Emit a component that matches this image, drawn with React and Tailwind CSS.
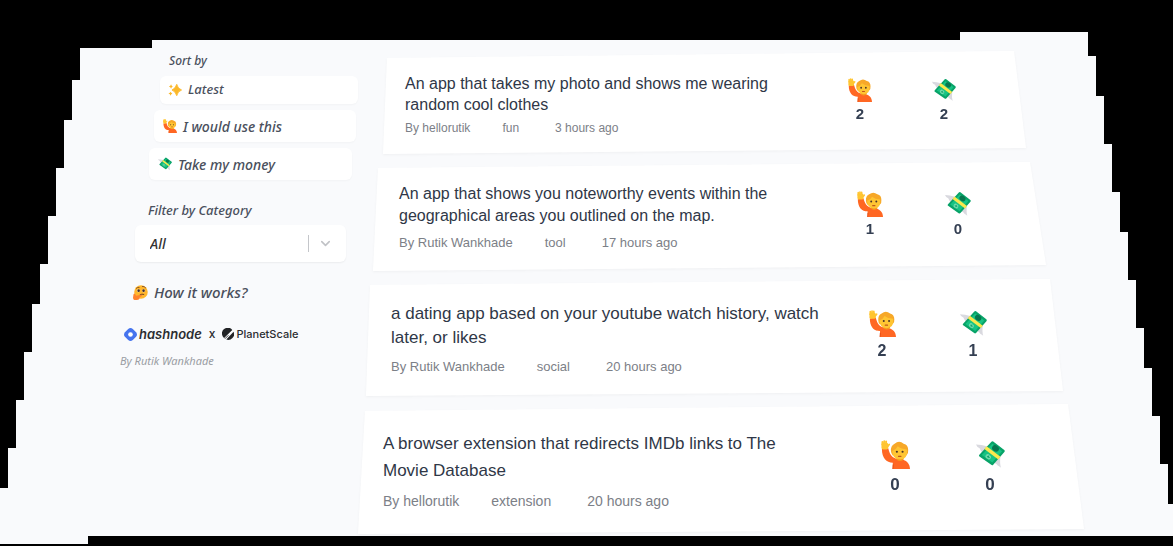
import React from "react";
import { ChevronDown } from "lucide-react";

function RaisedHand({ className }) {
  return (
    <svg viewBox="0 0 32 32" className={className} aria-hidden="true">
      <path d="M1 10 C1 20 6 25 13 25 L13 32 H32 C32 26 28 22 21 21 C14 21 10 18 8 9 Z" fill="#ff6723" />
      <path d="M13.500 27 L13 32" stroke="#e04a12" strokeWidth="1" />
      <path d="M17 18 H25 V21.500 Q21 25 17 21.500 Z" fill="#f59a1f" />
      <rect x="0.500" y="3" width="7.500" height="7.500" rx="2" fill="#ffc531" />
      <path d="M1.500 5 V2 M3.600 4 V1.200 M5.700 4 V1.500 M7.400 7 L9 5" stroke="#ffc531" strokeWidth="2" strokeLinecap="round" />
      <path d="M11 12 Q10.500 6 15 4 Q20 0 25 4 Q30 5 30 11 Q30.500 15 28 17 H13 Q11 15 11 12 Z" fill="#f7a828" />
      <path d="M12.500 12 Q17 10.500 18.500 7 Q22 10 28.500 10.500 Q30 21 21 21.500 Q12 20.500 12.500 12 Z" fill="#ffc533" />
      <circle cx="17.500" cy="13" r="1.200" fill="#4a3428" />
      <circle cx="23.800" cy="13" r="1.200" fill="#4a3428" />
      <path d="M19.300 18 H22" stroke="#c0561c" strokeWidth="1.400" fill="none" strokeLinecap="round" />
    </svg>
  );
}

function FlyingMoney({ className }) {
  return (
    <svg viewBox="0 0 32 30" className={className} aria-hidden="true">
      <path d="M0 4 Q6 4 12 6 L8 14 Q5 11 4 8 Q1 7 0 4 Z" fill="#d9d9df" />
      <path d="M27.500 29.500 Q26 25 27 17 L20 24 Q23 25 24 27 Q26 28 27.500 29.500 Z" fill="#d9d9df" />
      <path d="M17 .8 Q18 -.2 19 .6 L31.200 10 Q32.200 11 31.300 12.200 L19 26.200 Q18 27.200 16.800 26.400 L3.800 17.200 Q2.800 16.300 3.700 15.200 Z" fill="#08a368" />
      <path d="M18 3.200 L28.800 11.400 L18 23.800 L6.400 15.600 Z" fill="#17c383" />
      <ellipse cx="21.500" cy="8.300" rx="4" ry="3.200" fill="#07774e" transform="rotate(38 21.500 8.300)" />
      <ellipse cx="13.500" cy="17.500" rx="3.200" ry="2.600" fill="#6fdcac" transform="rotate(38 13.500 17.500)" />
      <path d="M12 16.800 L15.200 18.400 M14.200 16 L13.200 19" stroke="#0a9b63" strokeWidth=".9" />
      <path d="M11.700 5.800 L27 17.600 L24.600 20.400 L9.200 8.900 Z" fill="#fbe84d" />
    </svg>
  );
}

function Sparkles({ className }) {
  return (
    <svg viewBox="0 0 32 32" className={className} aria-hidden="true">
      <path d="M20 3 Q22 13 31 16 Q22 19 20 29 Q17 19 9 16 Q17 13 20 3 Z" fill="#fbb829" stroke="#fbb829" strokeWidth="2" strokeLinejoin="round" />
      <path d="M7 3 Q8 7 11 8 Q8 9 7 13 Q6 9 2 8 Q6 7 7 3 Z M6 20 Q7 23 10 24 Q7 25 6 29 Q5 25 1 24 Q5 23 6 20 Z" fill="#fbb829" />
    </svg>
  );
}

function Thinking({ className }) {
  return (
    <svg viewBox="0 0 32 32" className={className} aria-hidden="true">
      <circle cx="17" cy="15" r="14.500" fill="#ffb62c" />
      <circle cx="11.500" cy="12" r="3.400" fill="#ffe3a0" />
      <circle cx="22.500" cy="12" r="3.400" fill="#ffe3a0" />
      <circle cx="12" cy="12" r="2.700" fill="#402a32" />
      <circle cx="22.500" cy="12" r="2.700" fill="#402a32" />
      <path d="M7 7 Q10 4 13 5 M20 3 Q24 2 27 6" stroke="#6b3a20" strokeWidth="1.600" fill="none" strokeLinecap="round" />
      <path d="M15 21 Q19 18 23 20" stroke="#5a2c20" strokeWidth="1.800" fill="none" strokeLinecap="round" />
      <path d="M1 20 Q3 16 5 20 L7 23 L18 21 Q21 22 18 24 L14 26 Q15 31 8 32 H3 Q0 31 0 27 Z" fill="#ff822d" />
    </svg>
  );
}

function HashnodeMark({ className }) {
  return (
    <svg viewBox="0 0 28 28" className={className} aria-hidden="true">
      <path d="M2 9 L9 2 Q14 -2 19 2 L26 9 Q30 14 26 19 L19 26 Q14 30 9 26 L2 19 Q-2 14 2 9 Z" fill="#4674ee" />
      <circle cx="14" cy="14" r="5" fill="#fff" />
    </svg>
  );
}

function PlanetScaleMark({ className }) {
  return (
    <svg viewBox="0 0 28 28" className={className} aria-hidden="true">
      <path d="M1 18 A13.500 13.500 0 0 1 24 4.500 L5 23.500 Q2 21 1 18 Z" fill="#222326" />
      <path d="M27 9 A13.500 13.500 0 0 1 10 27 Z" fill="#222326" />
      <path d="M7 25 L15 17" stroke="#222326" strokeWidth="2" />
    </svg>
  );
}

const sortOptions = [
  { label: "Latest", Icon: Sparkles, box: "ml-10 h-7 w-[198px] pl-2 mt-[5px] text-[13px]" },
  { label: "I would use this", Icon: RaisedHand, box: "ml-[34px] h-8 w-[202px] pl-[9px] mt-[6px] text-[14px]" },
  { label: "Take my money", Icon: FlyingMoney, box: "ml-[29px] h-8 w-[203px] pl-[9px] mt-[6px] text-[14px]" },
];

const ideas = [
  {
    title: "An app that takes my photo and shows me wearing random cool clothes",
    author: "hellorutik",
    tag: "fun",
    time: "3 hours ago",
    use: 2,
    pay: 2,
    margin: "ml-[25px] mr-[147px]",
    shape: "pl-[22px] pr-[62px] pt-[22px] pb-[17px] [clip-path:polygon(4px_7px,calc(100%-12px)_0,100%_calc(100%-6px),0_100%)]",
    body: "max-w-[410px]",
    heading: "text-[16px] leading-[21px]",
    meta: "mt-1 text-[12px] leading-[18px]",
    votes: "gap-11 mt-[5px]",
    icon: "size-6 mb-[2px]",
    count: "text-[15px]",
  },
  {
    title: "An app that shows you noteworthy events within the geographical areas you outlined on the map.",
    author: "Rutik Wankhade",
    tag: "tool",
    time: "17 hours ago",
    use: 1,
    pay: 0,
    margin: "ml-[15px] mr-[127px]",
    shape: "pl-[26px] pr-[68px] pt-[21px] pb-[18px] [clip-path:polygon(5px_6px,calc(100%-16px)_0,100%_calc(100%-6px),0_100%)]",
    body: "max-w-[410px]",
    heading: "text-[16px] leading-[22px]",
    meta: "mt-[6px] text-[13px] leading-5",
    votes: "gap-12 mt-2",
    icon: "size-[26px] mb-[2px]",
    count: "text-[15px]",
  },
  {
    title: "a dating app based on your youtube watch history, watch later, or likes",
    author: "Rutik Wankhade",
    tag: "social",
    time: "20 hours ago",
    use: 2,
    pay: 1,
    margin: "ml-2 mr-[110px]",
    shape: "pl-[25px] pr-[70px] pt-[23px] pb-[19px] [clip-path:polygon(4px_6px,calc(100%-13px)_0,100%_calc(100%-5px),0_100%)]",
    body: "max-w-[440px]",
    heading: "text-[17px] leading-6",
    meta: "mt-[7px] text-[13px] leading-5",
    votes: "gap-[51px] mt-2",
    icon: "size-[27px] mb-1",
    count: "text-[16px]",
  },
  {
    title: "A browser extension that redirects IMDb links to The Movie Database",
    author: "hellorutik",
    tag: "extension",
    time: "20 hours ago",
    use: 0,
    pay: 0,
    margin: "ml-0 mr-[89px]",
    shape: "pl-[25px] pr-[74px] pt-[26px] pb-[23px] [clip-path:polygon(7px_7px,calc(100%-16px)_0,100%_calc(100%-5px),0_100%)]",
    body: "max-w-[430px]",
    heading: "text-[17px] leading-[27px]",
    meta: "mt-[7px] text-[14px] leading-5",
    votes: "gap-[55px] mt-[10px]",
    icon: "size-[29px] mb-[6px]",
    count: "text-[17px]",
  },
];

function Vote({ label, Icon, count, idea }) {
  return (
    <button type="button" aria-label={`${label}: ${count}`} className="flex w-10 flex-col items-center">
      <Icon className={idea.icon} />
      <span className={`font-bold leading-5 text-[#343f52] ${idea.count}`}>{count}</span>
    </button>
  );
}

function IdeaCard({ idea }) {
  return (
    <article className={`drop-shadow-[0_1px_1px_rgba(0,0,0,0.04)] ${idea.margin}`}>
      <div className={`flex items-start justify-between bg-white ${idea.shape}`}>
        <div className={idea.body}>
          <h2 className={`text-[#2f3747] ${idea.heading}`}>{idea.title}</h2>
          <p className={`flex gap-8 text-[#7c8087] ${idea.meta}`}>
            <span>By {idea.author}</span>
            <span className="mr-1">{idea.tag}</span>
            <span>{idea.time}</span>
          </p>
        </div>
        <div className={`flex shrink-0 ${idea.votes}`}>
          <Vote label="I would use this" Icon={RaisedHand} count={idea.use} idea={idea} />
          <Vote label="Take my money" Icon={FlyingMoney} count={idea.pay} idea={idea} />
        </div>
      </div>
    </article>
  );
}

export default function App() {
  return (
    <div className="min-h-screen bg-black font-['Liberation_Sans',Arial,sans-serif]">
      <main className="flex min-h-screen bg-[#f9fafc] pt-[51px] pb-[11px] pl-[120px] [clip-path:polygon(152px_40px,calc(100%-213px)_40px,calc(100%-213px)_32px,calc(100%-85px)_32px,calc(100%-85px)_56px,calc(100%-77px)_56px,calc(100%-77px)_96px,calc(100%-69px)_96px,calc(100%-69px)_144px,calc(100%-61px)_144px,calc(100%-61px)_192px,calc(100%-53px)_192px,calc(100%-53px)_232px,calc(100%-45px)_232px,calc(100%-45px)_280px,calc(100%-37px)_280px,calc(100%-37px)_328px,calc(100%-29px)_328px,calc(100%-29px)_368px,calc(100%-21px)_368px,calc(100%-21px)_416px,calc(100%-13px)_416px,calc(100%-13px)_464px,calc(100%-5px)_464px,calc(100%-5px)_504px,100%_504px,100%_calc(100%-10px),88px_calc(100%-10px),88px_calc(100%-2px),0_calc(100%-2px),0_488px,8px_488px,8px_448px,16px_448px,16px_400px,24px_400px,24px_352px,32px_352px,32px_304px,40px_304px,40px_264px,48px_264px,48px_216px,56px_216px,56px_168px,64px_168px,64px_120px,72px_120px,72px_80px,80px_80px,80px_48px,152px_48px)]">
        <aside className="w-[238px] shrink-0 font-['Noto_Sans','Open_Sans',sans-serif] font-medium italic text-[#4a505d]">
          <h3 className="ml-[49px] text-[12px] leading-5">Sort by</h3>
          {sortOptions.map(({ label, Icon, box }) => (
            <button
              key={label}
              type="button"
              className={`flex items-center gap-[6px] rounded-md bg-white shadow-[0_1px_2px_rgba(0,0,0,0.03)] ${box}`}
            >
              <Icon className="size-[14px]" />
              {label}
            </button>
          ))}
          <label htmlFor="category" className="mt-5 ml-7 block text-[13px] leading-5">
            Filter by Category
          </label>
          <div className="mt-[5px] ml-[15px] grid h-[37px] w-[211px] items-center rounded-md bg-white shadow-[0_1px_2px_rgba(0,0,0,0.06)]">
            <select
              id="category"
              defaultValue="All"
              className="col-start-1 row-start-1 h-full w-full appearance-none bg-transparent pl-[15px] text-[14px] italic text-[#333] outline-none"
            >
              <option>All</option>
              <option>fun</option>
              <option>tool</option>
              <option>social</option>
              <option>extension</option>
            </select>
            <span className="pointer-events-none col-start-1 row-start-1 mr-[13px] flex items-center gap-[9px] justify-self-end">
              <span className="h-[17px] w-px bg-[#c4c6ca]" />
              <ChevronDown className="size-[15px] text-[#c0c2c6]" strokeWidth={2.5} />
            </span>
          </div>
          <a href="#how" className="mt-5 ml-[13px] flex items-center gap-[6px] text-[15px] leading-5">
            <Thinking className="size-[15px]" />
            How it works?
          </a>
          <div className="mt-[22px] ml-1 flex items-center font-['Inter',sans-serif] leading-5 text-[#2b2d31]">
            <a href="#hashnode" className="flex items-center gap-[2px] text-[13px] font-semibold">
              <HashnodeMark className="size-[13px]" />
              hashnode
            </a>
            <span className="mx-[7px] text-[12px] not-italic">x</span>
            <a href="#planetscale" className="flex items-center gap-[2px] text-[11px] not-italic">
              <PlanetScaleMark className="size-[12px]" />
              PlanetScale
            </a>
          </div>
          <p className="mt-[7px] text-[11px] font-normal leading-5 text-[#9a9da3]">By Rutik Wankhade</p>
        </aside>
        <section className="flex min-w-0 flex-1 flex-col gap-2" aria-label="Ideas">
          {ideas.map((idea) => (
            <IdeaCard key={idea.title} idea={idea} />
          ))}
        </section>
      </main>
    </div>
  );
}
